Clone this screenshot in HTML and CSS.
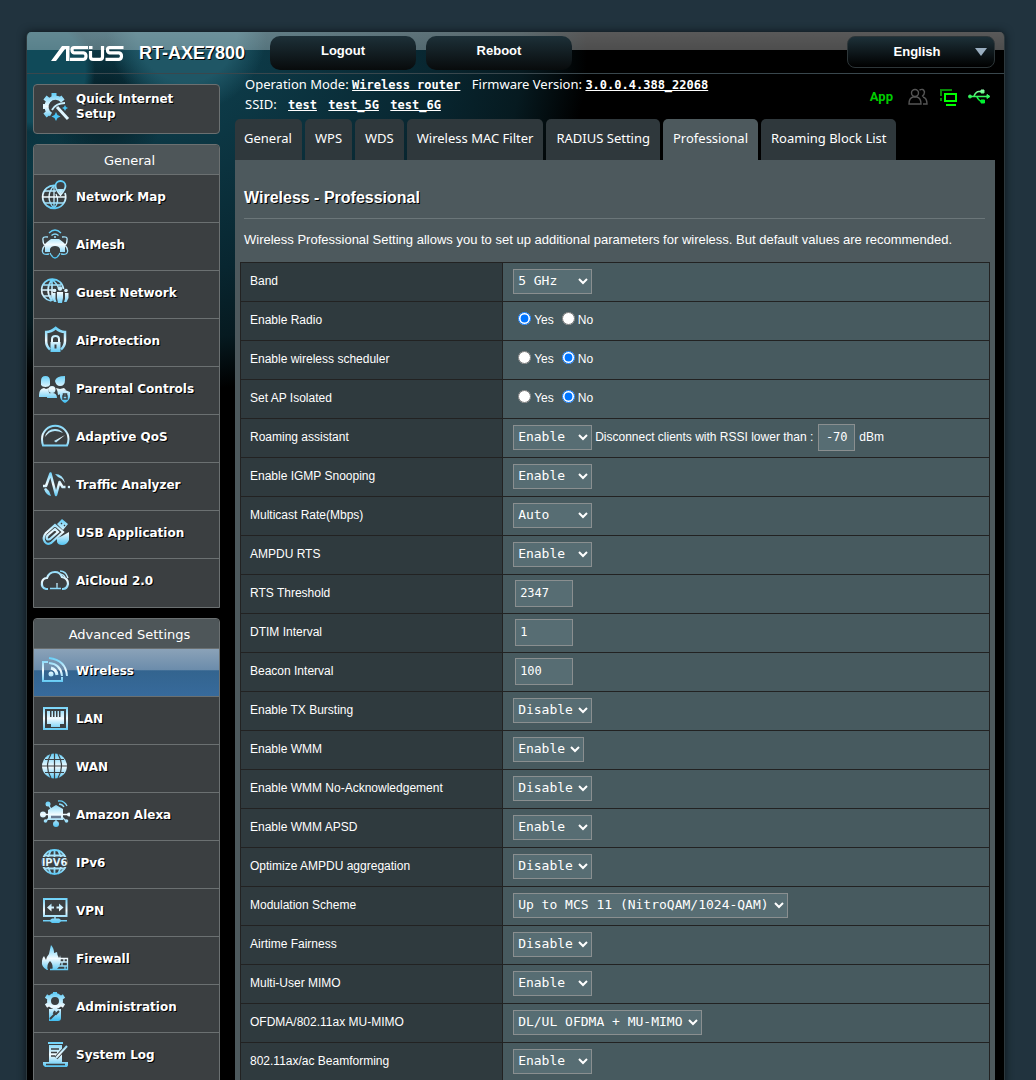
FILE: index.html
```html
<!DOCTYPE html>
<html lang="en">
<head>
<meta charset="utf-8">
<meta name="viewport" content="width=device-width, initial-scale=1">
<title>ASUS Wireless Router RT-AXE7800 - Professional</title>
<link rel="stylesheet" href="styles.css">
</head>
<body>
<svg class="defs" aria-hidden="true">
  <defs>
    <linearGradient id="ice" gradientUnits="userSpaceOnUse" x1="0" y1="3" x2="0" y2="30">
      <stop offset="0" stop-color="#5fcdf8"/><stop offset=".5" stop-color="#f2fbff"/><stop offset="1" stop-color="#45c0f2"/>
    </linearGradient>
    <linearGradient id="usb" gradientUnits="userSpaceOnUse" x1="0" y1="0" x2="0" y2="16">
      <stop offset="0" stop-color="#9dffb5"/><stop offset=".7" stop-color="#00f030"/>
    </linearGradient>
  </defs>
</svg>
<div class="shell">
  <header class="top">
    <a class="logo" href="#" aria-label="ASUS">
      <svg width="74" height="18" viewBox="0 0 74 18">
        <path fill="#fff" d="M0 17 11 2h7.500v15H15V5h-1L5 17z"/>
        <g fill="none" stroke="#fff" stroke-width="3.200"><path d="M37 3.500H23q-2 0-2 2.500t2 2.800h9.500q2.500.3 2.500 3.300t-2.500 3.300H19"/><path d="M39.500 7v6q0 2.400 2.500 2.400h7q2.500 0 2.500-2.400V2M38 3.500h3.500"/><path d="M72.500 3.500H58.500q-2 0-2 2.500t2 2.800H68q2.500.3 2.500 3.300T68 15.400H54.500"/></g>
      </svg>
    </a>
    <strong class="model">RT-AXE7800</strong>
    <button class="pill" type="button">Logout</button>
    <button class="pill" type="button">Reboot</button>
    <div class="lang">
      <select aria-label="Language"><option>English</option></select>
    </div>
  </header>

  <div class="body">
    <nav class="side">
      <a class="quick" href="#">
        <svg class="ico" viewBox="0 0 32 32"><path fill="none" stroke="url(#ice)" stroke-width="4" d="M24.500 11A9 9 0 1 0 13 24.500"/><path stroke="url(#ice)" stroke-width="5" d="M16 3v4M7 7.500l3 2.500M5 16.500h4M7 25.500l3-2.500M25 7.500l-3 2.500"/><path stroke="#dff6ff" stroke-width="3" d="m19 17 11 12"/><path fill="none" stroke="#c6edfc" stroke-width="2" d="M14 20q4-7 13-7"/><path fill="#49c4f5" d="m18 22 1.500 3 3 1.500-3 1.500-1.500 3-1.500-3-3-1.500 3-1.500zM27 15l1 2 2 1-2 1-1 2-1-2-2-1 2-1z"/></svg>
        <span>Quick Internet Setup</span>
      </a>

      <section class="menu">
        <h2>General</h2>
        <ul>
          <li><a href="#"><svg class="ico line" viewBox="0 0 32 32"><path stroke-width="1.800" d="M18 5.500A11.500 11.500 0 1 0 27 13"/><path d="M16 5.500Q6 17 16 28.500M18 14q4 8-2 14.500M16 6v22M6 11h12M4.500 17H28M6.500 23H26"/><path stroke-width="1.800" d="M22.500 15q-5-6-5-9a5 5 0 0 1 10 0q0 3-5 9z" fill="#3c4043"/><path class="f" d="M19 9h7l-3.500 5z"/></svg><span>Network Map</span></a></li>
          <li><a href="#"><svg class="ico line" viewBox="0 0 32 32"><path class="f" d="m9 14 4-3h8l4 3 2 2v8h-5v-3q-1-3-5-3t-5 3v3H7v-8z"/><path d="M11 5q6-6 12 0M13.500 7.500q3.500-3 7 0M10 9Q4 8 5 12q0 4 2 5-4 5-2 8 1 2 6 1M24 9q6-1 5 3 0 4-2 5 4 5 2 8-1 2-6 1M12 25q5 10 10 0"/><circle class="f" cx="17" cy="9" r="1"/></svg><span>AiMesh</span></a></li>
          <li><a href="#"><svg class="ico line" viewBox="0 0 32 32"><path stroke-width="1.600" d="M13 25A11 11 0 1 1 25.500 13M14 3.500Q6 14 14 25M14 3.500q6 5 6.500 9M14 4v21M5 9h18M3 14h15M5 20h8"/><g class="f"><circle cx="22" cy="12.500" r="2.200"/><circle cx="16.500" cy="14.500" r="1.800"/><circle cx="28" cy="14.500" r="1.800"/><path d="M19 16h6v6l-1 5h-4l-1-5zM14 17h3.500v6l1 3h-2.500L14 22zM30.500 17H27v6l-1 3h2.500l2-4z"/></g></svg><span>Guest Network</span></a></li>
          <li><a href="#"><svg class="ico line" viewBox="0 0 32 32"><path stroke-width="2.500" d="M12 25.500Q8 22 8.200 17V8q5 0 9.500-4Q22 8 27 8v9q0 5-4 8.500"/><path stroke-width="2" d="M14 18v-3q0-3 3.500-3t3.500 3v3"/><path class="f" d="M12.500 18h10v10h-10z"/><path stroke="#3c4043" stroke-width="2" d="M17.500 20.500v4"/></svg><span>AiProtection</span></a></li>
          <li><a href="#"><svg class="ico line" viewBox="0 0 32 32"><g class="f"><path d="M3 13V9q0-5 4.500-5T12 9v4q-1 2-4.500 2T3 13zM17 9q1-5 10-5v4q0 6-5 6-4 0-5-5zM1 23q0-6 5-7l2 1 3-1q-1 4 1 6l-2 3H1zM18 16l4 1 4-1 2 2q-4 1-5 4l-3 1q0-4-2-7z"/><circle cx="14" cy="17.500" r="3.500"/><path d="M9 26q0-5 5-5t5 5zM27 18l5 2v5q-1 4-5 6-4-2-5-6v-5z"/></g><path stroke="#3c4043" stroke-width="1.500" d="M25 24h4v3h-4zM25.500 24v-2h3v2"/></svg><span>Parental Controls</span></a></li>
          <li><a href="#"><svg class="ico line" viewBox="0 0 32 32"><path stroke-width="2" d="M5 25.500h24q1.500-3 1.500-6.500A13 13 0 0 0 4 19q0 3.500 1 6.500z"/><path class="f" d="M7 17Q9 9 17 9q5 0 8 4-4-2-8-2-6 0-10 6z"/><path class="f" d="m16 21 11-6-9 7.500z"/></svg><span>Adaptive QoS</span></a></li>
          <li><a href="#"><svg class="ico line" viewBox="0 0 32 32"><path stroke-width="2.500" stroke-linejoin="round" d="M5 18h3l4.500-12.500L18 27l3.500-13 3 5h3"/><path class="f" d="M6 21q2 6 7 7l-2-5-3-3zM17 6q8 0 10 9l-3-4-4-2z"/><circle class="f" cx="31" cy="19" r="1.300"/></svg><span>Traffic Analyzer</span></a></li>
          <li><a href="#"><svg class="ico line" viewBox="0 0 32 32"><path stroke-width="2.200" d="m8 17 9-8 8 7-12 11q-4 2-6-1-3-4 1-9zM9 23q-1-2 1-4l7-6 3 3-8 7q-2 1-3 0z"/><path class="f" d="m19 8 5-5 6 5-5 6zM19 22q3-1 5-2l7-4v8q-2 5-7 5-4 0-5-3z"/><path stroke="#3c4043" d="m23 7 1 1m2 1 1 1"/></svg><span>USB Application</span></a></li>
          <li><a href="#"><svg class="ico line" viewBox="0 0 32 32"><path stroke-width="2.200" d="M10 25H8q-5-1-4-7 1-4 5-4 2-6 8-6 5 0 7 5 6 1 6 7-1 5-5 5h-1"/><path d="M12 24.500h11M19 19v5M22 7q6 0 8 7M23 10q3 1 4 3"/></svg><span>AiCloud 2.0</span></a></li>
        </ul>
      </section>

      <section class="menu">
        <h2>Advanced Settings</h2>
        <ul>
          <li><a class="on" href="#"><svg class="ico line" viewBox="0 0 32 32"><path stroke-width="2" d="M10 8H5v19h19v-4M11 4q17 2 18 18M11 9q12 1 13 13"/><path stroke-width="3" d="M13 14q5 1 6 7"/><circle class="f" cx="13" cy="20" r="2.500"/></svg><span>Wireless</span></a></li>
          <li><a href="#"><svg class="ico line" viewBox="0 0 32 32"><path stroke-width="2" d="M6 6h23v21H6z"/><path class="f" d="M9 9h3v6h1.500V9H15v6h1.500V9H18v6h1.500V9H21v6h1.500V9H26v13h-4v3h-9v-3H9z"/></svg><span>LAN</span></a></li>
          <li><a href="#"><svg class="ico" viewBox="0 0 32 32"><circle cx="16.500" cy="16" r="12.500" fill="url(#ice)"/><path fill="none" stroke="#3c4043" stroke-width="1.200" d="M16.500 3v26M4 16h25M7 9.500h19M7 22.500h19M13 4q-7 12 0 24M20 4q7 12 0 24"/></svg><span>WAN</span></a></li>
          <li><a href="#"><svg class="ico line" viewBox="0 0 32 32"><g class="f"><path d="m10 12 8-5 7 4v11H10z"/><circle cx="10" cy="6" r="2.500"/><circle cx="5" cy="16.500" r="3"/><circle cx="31" cy="16.500" r="2"/><circle cx="18" cy="26" r="3"/><circle cx="7.500" cy="23" r="1.800"/><circle cx="28.500" cy="23" r="1.800"/></g><path d="m10 6 3 5M5 16.500h26M18 22v4M8 23l4-4M28 23l-4-4M20 3q6-1 9 5M21 6q3 0 5 3"/><path stroke="#6a7b92" stroke-width="2.500" d="M13 19h10"/></svg><span>Amazon Alexa</span></a></li>
          <li><a href="#"><svg class="ico line" viewBox="0 0 32 32"><circle cx="16.500" cy="16" r="12" stroke-width="1.800"/><path stroke-width="1.800" d="M16.500 4v24M6 9.500h21M6 22.500h21M13 4q-7 12 0 24M20 4q7 12 0 24"/><path fill="#3c4043" stroke="none" d="M3.500 11h26v10h-26z"/><text class="f" x="16.500" y="20" text-anchor="middle" font-size="10">IPV6</text></svg><span>IPv6</span></a></li>
          <li><a href="#"><svg class="ico line" viewBox="0 0 32 32"><path stroke-width="2" d="M6 5h22.500v17H6z"/><path stroke-width="1.500" d="M17 22v4"/><path class="f" d="m9 13.500 4.500-4v3H16v2h-2.500v3zM25.500 13.500l-4.500-4v3h-2.500v2H21v3zM5 26h7l2-1.500h7l2 1.500h6v1.500h-6L21 29h-7l-2-1.500H5z"/></svg><span>VPN</span></a></li>
          <li><a href="#"><svg class="ico line" viewBox="0 0 32 32"><path class="f" d="M9 28q-6-3-5-9 0-3 2-5l2 4q1-4 3-6 1-5 2-9 3 3 3 8l3-1q0 3 2 6 1-1 1-3 3 9-4 15h-4q2-5-2-9-4 4-2 9z"/><path d="M22 16.500h7.500v11H12M22 20h7M20 24h9M26 17v3M24 20v4M27 24v3"/></svg><span>Firewall</span></a></li>
          <li><a href="#"><svg class="ico line" viewBox="0 0 32 32"><circle cx="17" cy="11" r="6" stroke-width="4"/><path stroke-width="4" d="M17 2v3M17 17v3M8 6l3 2M26 6l-3 2M8 16l3-2M26 16l-3-2"/><path class="f" d="M11 19h12v9q0 3-3 3h-9z"/><path stroke="#3c4043" stroke-width="2" d="m12 29 5-5M21 21l-3 3-2-1 1-2"/></svg><span>Administration</span></a></li>
          <li><a href="#"><svg class="ico line" viewBox="0 0 32 32"><path class="f" d="M10 4h15v2H10zM11 7h13v17H11zM5 24h25v3.500l-1 1.500H7l-2-2z"/><path stroke="#3c4043" stroke-width="1.300" d="M13 11h8M13 14.500h6M13 18h4M8 26.500h19"/><path stroke="#3c4043" stroke-width="4" d="m18 20 11-12"/><path stroke-width="2" d="m18 20 11-12"/></svg><span>System Log</span></a></li>
        </ul>
      </section>
    </nav>

    <main class="main">
      <div class="info">
        <div class="facts">
          <p>Operation Mode: <a href="#">Wireless router</a> <span class="fw">Firmware Version:</span> <a href="#">3.0.0.4.388_22068</a></p>
          <p>SSID: <a class="ssid" href="#">test</a> <a class="ssid" href="#">test_5G</a> <a class="ssid" href="#">test_6G</a></p>
        </div>
        <div class="status">
          <a href="#">App</a>
          <svg width="20" height="18" viewBox="0 0 20 18" fill="none" stroke="#555" stroke-width="1.400"><circle cx="7" cy="5" r="3.500"/><path d="M11.500 2q4-2 5 2 0 3-2.500 4.500M1 16q0-6 4-7h4q4 1 4 7zM15 9q4 1 4 7h-4"/></svg>
          <svg width="18" height="18" viewBox="0 0 18 18" fill="none"><path stroke="#078a07" stroke-width="2" d="M2 8V2h11M2 10v3"/><path stroke="#0f0" stroke-width="2" d="M6 6h11v7H6zM7 17h10"/></svg>
          <svg width="22" height="16" viewBox="0 0 22 16" fill="url(#usb)" stroke="url(#usb)"><path fill="none" stroke-width="1.600" d="M2 7.500h17M6 7q2-4.500 5-4.500h3M9 8q2 4.500 6 4.500"/><circle cx="2" cy="7.500" r="1.500"/><path d="M19 5.500v4l3-2zM13 1h3v3h-3zM13 11h3.500v3H13z"/></svg>
        </div>
      </div>

      <nav class="tabs">
        <a href="#">General</a><a href="#">WPS</a><a href="#">WDS</a><a href="#">Wireless MAC Filter</a><a href="#">RADIUS Setting</a><a class="on" href="#">Professional</a><a href="#">Roaming Block List</a>
      </nav>

      <form class="panel">
        <h1>Wireless - Professional</h1>
        <p class="note">Wireless Professional Setting allows you to set up additional parameters for wireless. But default values are recommended.</p>
        <table>
          <tr><th scope="row"><label for="band">Band</label></th><td><select id="band"><option>5 GHz</option><option>2.4 GHz</option></select></td></tr>
          <tr><th scope="row">Enable Radio</th><td><div class="radios"><label><input type="radio" name="radio" checked>Yes</label><label><input type="radio" name="radio">No</label></div></td></tr>
          <tr><th scope="row">Enable wireless scheduler</th><td><div class="radios"><label><input type="radio" name="sched">Yes</label><label><input type="radio" name="sched" checked>No</label></div></td></tr>
          <tr><th scope="row">Set AP Isolated</th><td><div class="radios"><label><input type="radio" name="iso">Yes</label><label><input type="radio" name="iso" checked>No</label></div></td></tr>
          <tr><th scope="row"><label for="roam">Roaming assistant</label></th><td><div class="roam"><select id="roam"><option>Enable</option><option>Disable</option></select><label for="rssi">Disconnect clients with RSSI lower than :</label><input class="short" id="rssi" type="text" value="-70"><span>dBm</span></div></td></tr>
          <tr><th scope="row"><label for="igmp">Enable IGMP Snooping</label></th><td><select id="igmp"><option>Enable</option><option>Disable</option></select></td></tr>
          <tr><th scope="row"><label for="mrate">Multicast Rate(Mbps)</label></th><td><select id="mrate"><option>Auto</option><option>OFDM 6</option></select></td></tr>
          <tr><th scope="row"><label for="ampdu">AMPDU RTS</label></th><td><select id="ampdu"><option>Enable</option><option>Disable</option></select></td></tr>
          <tr><th scope="row"><label for="rts">RTS Threshold</label></th><td><input id="rts" type="text" value="2347"></td></tr>
          <tr><th scope="row"><label for="dtim">DTIM Interval</label></th><td><input id="dtim" type="text" value="1"></td></tr>
          <tr><th scope="row"><label for="beacon">Beacon Interval</label></th><td><input id="beacon" type="text" value="100"></td></tr>
          <tr><th scope="row"><label for="burst">Enable TX Bursting</label></th><td><select id="burst"><option>Disable</option><option>Enable</option></select></td></tr>
          <tr><th scope="row"><label for="wmm">Enable WMM</label></th><td><select class="fit" id="wmm"><option>Enable</option></select></td></tr>
          <tr><th scope="row"><label for="noack">Enable WMM No-Acknowledgement</label></th><td><select id="noack"><option>Disable</option><option>Enable</option></select></td></tr>
          <tr><th scope="row"><label for="apsd">Enable WMM APSD</label></th><td><select id="apsd"><option>Enable</option><option>Disable</option></select></td></tr>
          <tr><th scope="row"><label for="aggr">Optimize AMPDU aggregation</label></th><td><select id="aggr"><option>Disable</option><option>Enable</option></select></td></tr>
          <tr><th scope="row"><label for="mod">Modulation Scheme</label></th><td><select id="mod"><option>Up to MCS 11 (NitroQAM/1024-QAM)</option></select></td></tr>
          <tr><th scope="row"><label for="air">Airtime Fairness</label></th><td><select id="air"><option>Disable</option><option>Enable</option></select></td></tr>
          <tr><th scope="row"><label for="mimo">Multi-User MIMO</label></th><td><select id="mimo"><option>Enable</option><option>Disable</option></select></td></tr>
          <tr><th scope="row"><label for="ofdma">OFDMA/802.11ax MU-MIMO</label></th><td><select id="ofdma"><option>DL/UL OFDMA + MU-MIMO</option></select></td></tr>
          <tr><th scope="row"><label for="beam">802.11ax/ac Beamforming</label></th><td><select id="beam"><option>Enable</option><option>Disable</option></select></td></tr>
        </table>
      </form>
    </main>
  </div>
</div>
</body>
</html>
```

FILE: styles.css
```css
* { box-sizing: border-box; }

body {
  margin: 0;
  padding: 32px 31px 0 26px;
  background: #21333e;
  color: #fff;
  font: 12px/16px "Liberation Sans", Arial, sans-serif;
}

h1, h2, p, ul { margin: 0; padding: 0; }
ul { list-style: none; }
a { color: inherit; text-decoration: none; }
.defs { position: absolute; width: 0; height: 0; }

.shell {
  border-left: 1px solid #2c383d;
  border-right: 1px solid #2c383d;
  border-radius: 5px 5px 0 0;
  overflow: hidden;
  box-shadow: 0 0 8px #0c151a;
  background:
    radial-gradient(circle at 8px 40px, #104a59 0 50px, transparent 60px),
    radial-gradient(circle at 160px 0, #1f5665 0 50px, transparent 80px),
    radial-gradient(ellipse at 80px 70px, #041a21 0, transparent 60px),
    radial-gradient(circle at 20px 140px, #0b3945 0, transparent 60px),
    radial-gradient(ellipse 430px 340px at 130px 20px, #0f4352 0, #082630 65%, #061a20 85%, transparent 100%),
    #000;
}

.top {
  display: flex;
  align-items: center;
  height: 42px;
  padding: 0 9px 0 24px;
  border-bottom: 1px solid #39474d;
  background: linear-gradient(rgba(255, 255, 255, .35), rgba(255, 255, 255, .3)) 0 0 / 100% 18px no-repeat;
}
.logo { display: flex; }
.model {
  width: 131px;
  margin-left: 14px;
  font: bold 18px/24px "Liberation Sans", Arial, sans-serif;
  text-shadow: 1px 1px 0 #000;
}
.pill {
  width: 146px;
  height: 34px;
  margin-right: 10px;
  padding: 0 0 3px;
  border: 0;
  border-radius: 10px;
  background: linear-gradient(#1d3038, #080b0c);
  color: #fff;
  font: bold 13px/18px "Liberation Sans", Arial, sans-serif;
}
.lang { position: relative; margin: 0 0 1px auto; }
.lang select {
  appearance: none;
  width: 148px;
  height: 32px;
  padding: 0 8px 1px 0;
  border: 1px solid #2d3639;
  border-radius: 8px;
  background: linear-gradient(#1d3038, #000);
  color: #fff;
  font: bold 13px/18px "Liberation Sans", Arial, sans-serif;
  text-align: center;
  text-align-last: center;
}
.lang::after {
  content: "";
  position: absolute;
  right: 8px;
  top: 12px;
  border: 6px solid transparent;
  border-top: 8px solid #9aaec0;
  border-bottom: 0;
  pointer-events: none;
}

.body {
  display: grid;
  grid-template-columns: 187px minmax(0, 1fr);
  gap: 15px;
  padding: 0 9px 0 6px;
}

.side {
  display: flex;
  flex-direction: column;
  gap: 10px;
  padding-top: 10px;
  font: bold 12px/15px "DejaVu Sans", Verdana, sans-serif;
  text-shadow: 1px 1px 0 #000;
}
.side span { padding-top: 2px; }
.ico { flex: none; width: 32px; height: 32px; }
.line { fill: none; stroke: url(#ice); stroke-width: 1.300; }
.line .f { fill: url(#ice); stroke: none; text-shadow: none; }
.quick {
  display: flex;
  gap: 6px;
  height: 50px;
  padding: 5px 40px 0 4px;
  border: 1px solid #6b7071;
  border-radius: 4px;
  background: #3b3f41;
}
.menu { padding-bottom: 1px; border: 1px solid #6b7071; border-radius: 4px 4px 0 0; background: #3b3f41; }
.menu h2 {
  height: 29px;
  padding: 8px 0 0 6px;
  border-radius: 4px 4px 0 0;
  background: #4e5659;
  font: 13px/16px "DejaVu Sans", Verdana, sans-serif;
  text-align: center;
  text-shadow: none;
}
.menu a {
  display: flex;
  align-items: center;
  gap: 6px;
  height: 48px;
  padding: 5px 0 10px 4px;
  border-top: 1px solid #6b7071;
}
.menu a.on { background: linear-gradient(#8ba2b8, #6b8cab 45%, #33648f 46%, #376a9b); }

.info { display: flex; justify-content: space-between; height: 45px; padding: 1px 5px 0 10px; }
.facts { font: 13px/19px "Noto Sans", sans-serif; white-space: nowrap; }
.facts a { font: bold 12px/19px "DejaVu Sans Mono", monospace; text-decoration: underline; }
.facts .fw { margin-left: 8px; }
.facts .ssid { margin-left: 8px; }
.status { display: flex; align-items: center; gap: 11px; }
.status a { margin-right: 4px; color: #0c0; font: bold 13px/16px Roboto, sans-serif; }

.tabs { display: flex; gap: 3px; font: 13px/18px "Noto Sans", sans-serif; white-space: nowrap; }
.tabs a { height: 41px; padding: 10px 10px 11px 9px; border-radius: 5px 5px 0 0; background: #2f383c; }
.tabs a + a { padding-left: 10px; }
.tabs a.on { background: #4d595d; }

.panel { padding: 27px 5px 20px; background: #4d595d; }
.panel h1 {
  margin: 0 5px 13px 4px;
  padding-bottom: 10px;
  border-bottom: 1px solid #6b7679;
  font: bold 16px/21px "Liberation Sans", Arial, sans-serif;
  text-shadow: 1px 1px 0 #000;
}
.note { margin: 0 4px 14px; font-size: 13px; }

table { width: 100%; border-collapse: collapse; }
th, td { height: 39px; padding: 0 10px 2px; border: 1px solid #222; text-align: left; font-weight: normal; }
th { width: 35%; padding-left: 9px; background: #2f3a3e; }
td { background: #475a5f; }

td select, td input[type=text] {
  border: 1px solid #8a8f90;
  border-radius: 0;
  background: #576d73;
  color: #fff;
  font: 13px/17px "DejaVu Sans Mono", monospace;
}
td select { display: block; min-width: 79px; height: 25px; padding: 0 2px 2px 0; }
td select.fit { min-width: 0; }
td input[type=text] { display: block; width: 58px; height: 27px; margin-left: 2px; padding: 0 4px; font-size: 12px; }
td input.short { width: 37px; margin: 0 4px 0 5px; padding: 0; text-align: center; }
.roam { display: flex; align-items: center; }
.roam label { margin-left: 3px; }
.radios { display: flex; gap: 8px; padding-left: 5px; }
.radios label { display: flex; align-items: center; gap: 3px; }
.radios input { width: 13px; height: 13px; margin: 0 0 3px; }
```
